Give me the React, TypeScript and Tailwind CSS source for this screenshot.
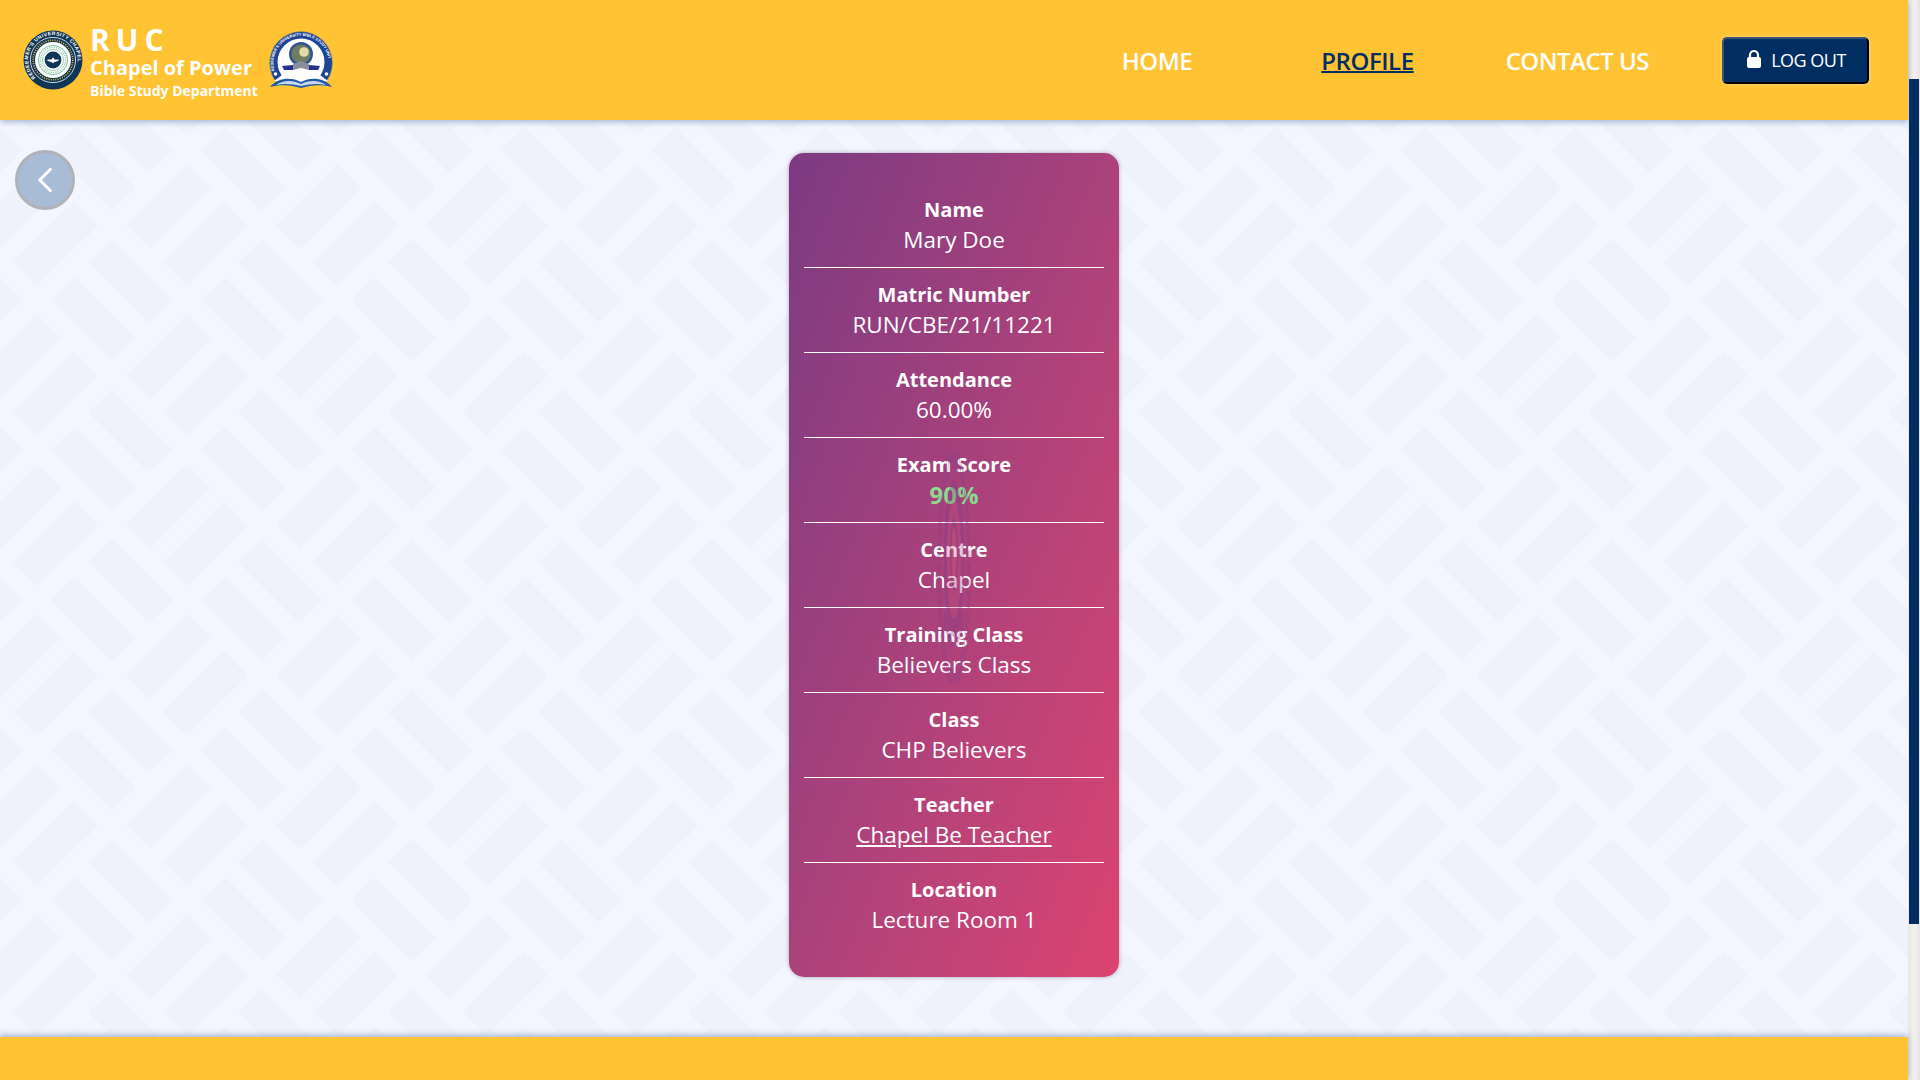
import { ChevronLeft } from 'lucide-react'

const rows = [
  { label: 'Name', value: 'Mary Doe' },
  { label: 'Matric Number', value: 'RUN/CBE/21/11221' },
  { label: 'Attendance', value: '60.00%' },
  { label: 'Exam Score', value: '90%', score: true },
  { label: 'Centre', value: 'Chapel' },
  { label: 'Training Class', value: 'Believers Class' },
  { label: 'Class', value: 'CHP Believers' },
  { label: 'Teacher', value: 'Chapel Be Teacher', link: true },
  { label: 'Location', value: 'Lecture Room 1' }
]

const bricks = [
  '75,7 136,68 112,91 51,30',
  '112,119 173,180 149,203 88,142',
  '37,44 61,68 0,129 -24,105',
  '74,81 98,106 37,166 13,142'
]

const shifts = [-150, 0, 150]

function Pattern() {
  return (
    <svg className="absolute inset-0 h-full w-full" aria-hidden="true">
      <defs>
        <pattern id="bricks" width="150" height="150" patternUnits="userSpaceOnUse">
          {shifts.map((dx) =>
            shifts.map((dy) =>
              bricks.map((points) => (
                <polygon key={`${dx}-${dy}-${points}`} points={points} fill="#eff2fb" transform={`translate(${dx} ${dy})`} />
              ))
            )
          )}
        </pattern>
      </defs>
      <rect width="100%" height="100%" fill="url(#bricks)" />
    </svg>
  )
}

function ChapelLogo() {
  return (
    <svg width="60" height="60" viewBox="0 0 60 60" className="shrink-0">
      <defs>
        <path id="chapelArc" d="M12.5 47.5 A24.8 24.8 0 1 1 47.5 47.5" />
      </defs>
      <circle cx="30" cy="30" r="29.5" fill="#0f3557" />
      <text fontSize="5" fontWeight="700" fill="#fff" fontFamily="'Liberation Sans', sans-serif" letterSpacing="0.45">
        <textPath href="#chapelArc">REDEEMER'S UNIVERSITY CHAPEL</textPath>
      </text>
      <circle cx="30" cy="30" r="22.6" fill="none" stroke="#fff" strokeWidth="0.8" />
      <circle cx="30" cy="30" r="19.8" fill="none" stroke="#e8c23a" strokeWidth="1.6" strokeDasharray="1 1.3" />
      <circle cx="30" cy="30" r="18" fill="#fff" />
      <circle cx="30" cy="30" r="14.6" fill="none" stroke="#43a877" strokeWidth="0.7" />
      <circle cx="30" cy="30" r="12.6" fill="none" stroke="#a5cdb8" strokeWidth="1.6" strokeDasharray="1.2 1.1" />
      <circle cx="30" cy="30" r="10.6" fill="#fff" stroke="#43a877" strokeWidth="0.5" />
      <circle cx="30" cy="30" r="8.4" fill="#0f3557" />
      <path d="M23.5 30 C25.5 29.2 27.2 29.4 28.5 29.4 L30 27.2 L31.5 29.4 C32.8 29.4 34.5 29.2 36.5 30 C34.5 31.2 33 32 31.5 32 L30 33.2 L28.5 32 C27 32 25.5 31.2 23.5 30 Z" fill="#fff" />
    </svg>
  )
}

function BibleStudyLogo() {
  return (
    <svg width="66" height="58" viewBox="0 0 66 58" className="shrink-0">
      <defs>
        <path id="bibleArc" d="M6.5 40 A27.6 27.6 0 1 1 59.5 40" />
      </defs>
      <circle cx="33" cy="32" r="31.5" fill="#1d4595" stroke="#c9a54a" strokeWidth="0.6" />
      <circle cx="33" cy="31" r="23.5" fill="#fff" />
      <rect x="0" y="50" width="66" height="8" fill="#ffc333" />
      <path d="M6 50 L14 44 L52 44 L60 50 L33 54 Z" fill="#fff" />
      <text fontSize="4" fontWeight="700" fill="#fff" fontFamily="'Liberation Sans', sans-serif">
        <textPath href="#bibleArc">REDEEMER'S UNIVERSITY BIBLE STUDY UNIT</textPath>
      </text>
      <circle cx="7.5" cy="43" r="1.8" fill="#fff" />
      <circle cx="58.5" cy="43" r="1.8" fill="#fff" />
      <circle cx="33" cy="23" r="12" fill="#34548f" />
      <circle cx="33" cy="23" r="9.5" fill="#6f7d62" />
      <circle cx="36" cy="21" r="4.8" fill="#e6dba8" />
      <path d="M25 33 L33 30 L41 33 L41 39 L33 37 L25 39 Z" fill="#8d8e9e" />
      <path d="M14 35 L25 34 L25 39 L16 39 Z M52 35 L41 34 L41 39 L50 39 Z" fill="#25308f" />
      <path d="M2 56 C10 46 24 46 33 51 C42 46 56 46 64 56 C54 53 42 54 33 57 C24 54 12 53 2 56 Z" fill="#1f5aa8" />
      <path d="M8 54 C15 49 25 49 33 53 C41 49 51 49 58 54 C50 52 41 53 33 55 C25 53 16 52 8 54 Z" fill="#c9d8ee" />
    </svg>
  )
}

function Watermark() {
  return (
    <svg
      width="36"
      height="230"
      viewBox="0 0 100 100"
      preserveAspectRatio="none"
      className="pointer-events-none absolute left-[147px] top-[300px] opacity-30"
      aria-hidden="true"
    >
      <ellipse cx="50" cy="50" rx="42" ry="48" fill="none" stroke="#7a3c8c" strokeWidth="9" strokeDasharray="3 2" />
      <ellipse cx="50" cy="46" rx="24" ry="30" fill="#c0517c" stroke="#7a3c8c" strokeWidth="8" />
      <ellipse cx="50" cy="44" rx="9" ry="14" fill="#d7606f" stroke="#7a3c8c" strokeWidth="4" />
      <path d="M22 76 L46 86 L46 82 L22 72 Z M78 76 L54 86 L54 82 L78 72 Z" fill="#7a3c8c" />
      <path d="M22 71 L46 80 L46 77 L22 68 Z M78 71 L54 80 L54 77 L78 68 Z" fill="#7a3c8c" />
    </svg>
  )
}

export default function App() {
  return (
    <div className="flex h-screen overflow-hidden bg-[#f3f6fe] font-['Open_Sans',sans-serif]">
      <div className="flex w-[1908px] flex-col">
        <header className="relative z-10 flex h-[120px] shrink-0 items-center justify-between bg-[#ffc333] pl-[23px] pr-[39px] shadow-[0_2px_6px_rgba(70,100,160,0.45)]">
          <div className="flex items-center">
            <ChapelLogo />
            <div className="ml-[7px] flex flex-col pt-[6px] font-bold text-white">
              <span className="text-[30px] leading-[30px] tracking-[6px]">RUC</span>
              <span className="text-[20px] leading-[26px]">Chapel of Power</span>
              <span className="text-[14px] leading-[20px]">Bible Study Department</span>
            </div>
            <div className="ml-[10px]">
              <BibleStudyLogo />
            </div>
          </div>
          <nav className="flex items-center">
            <a href="#" className="mt-[2px] text-[24px] font-semibold tracking-[-0.5px] text-white">HOME</a>
            <a href="#" className="ml-[129px] mt-[2px] text-[24px] font-semibold tracking-[-0.45px] text-[#002d62] underline decoration-2">PROFILE</a>
            <a href="#" className="ml-[92px] mt-[2px] text-[24px] font-semibold tracking-[-0.5px] text-white">CONTACT US</a>
            <button className="ml-[73px] flex h-[47px] w-[147px] items-center justify-center gap-[8px] rounded-[5px] border-2 border-b-black border-l-[#3c5474] border-r-black border-t-[#3c5474] bg-[#002d62] text-[18px] tracking-[-0.5px] text-white shadow-[0_0_4px_rgba(255,255,255,0.4)]">
              <svg width="18" height="20" viewBox="0 0 18 20" className="mb-[3px]">
                <path d="M5 9 V6 a4 4 0 0 1 8 0 V9" fill="none" stroke="#fff" strokeWidth="2.2" />
                <rect x="2" y="8" width="14" height="11" rx="2" fill="#fff" />
              </svg>
              LOG OUT
            </button>
          </nav>
        </header>

        <main className="relative flex min-h-0 flex-1 justify-center pt-[33px]">
          <Pattern />
          <button className="absolute left-[15px] top-[30px] flex h-[60px] w-[60px] items-center justify-center rounded-full border-[3px] border-[#b0b2b9] bg-[#a9bcd6] text-white">
            <ChevronLeft size={42} strokeWidth={1.8} />
          </button>
          <section className="relative h-[824px] w-[330px] rounded-[15px] bg-gradient-to-br from-[#7c3a82] to-[#dc4370] px-[15px] py-[30px] text-center text-white shadow-[0_0_4px_rgba(60,60,90,0.4)]">
            {rows.map((row, index) => (
              <div key={row.label} className={`py-3 ${index < rows.length - 1 ? 'border-b border-white' : ''}`}>
                <div className="text-[20px] font-bold leading-[30px]">{row.label}</div>
                {row.score ? (
                  <div className="text-[24px] font-bold leading-[30px] text-[#8ddb8c]">{row.value}</div>
                ) : row.link ? (
                  <a href="#" className="block text-[22.5px] leading-[30px] underline">{row.value}</a>
                ) : (
                  <div className="text-[22.5px] leading-[30px]">{row.value}</div>
                )}
              </div>
            ))}
            <Watermark />
          </section>
        </main>

        <footer className="relative z-10 h-[43px] shrink-0 bg-[#ffc333] shadow-[0_-2px_6px_rgba(70,100,160,0.45)]" />
      </div>

      <div className="w-[12px] shrink-0 bg-gradient-to-r from-[#e8e5e4] via-[#f4f2f1] to-[#e6e3e2] pl-[1px] pt-[79px]">
        <div className="h-[845px] w-[10px] bg-[#002d62]" />
      </div>
    </div>
  )
}
